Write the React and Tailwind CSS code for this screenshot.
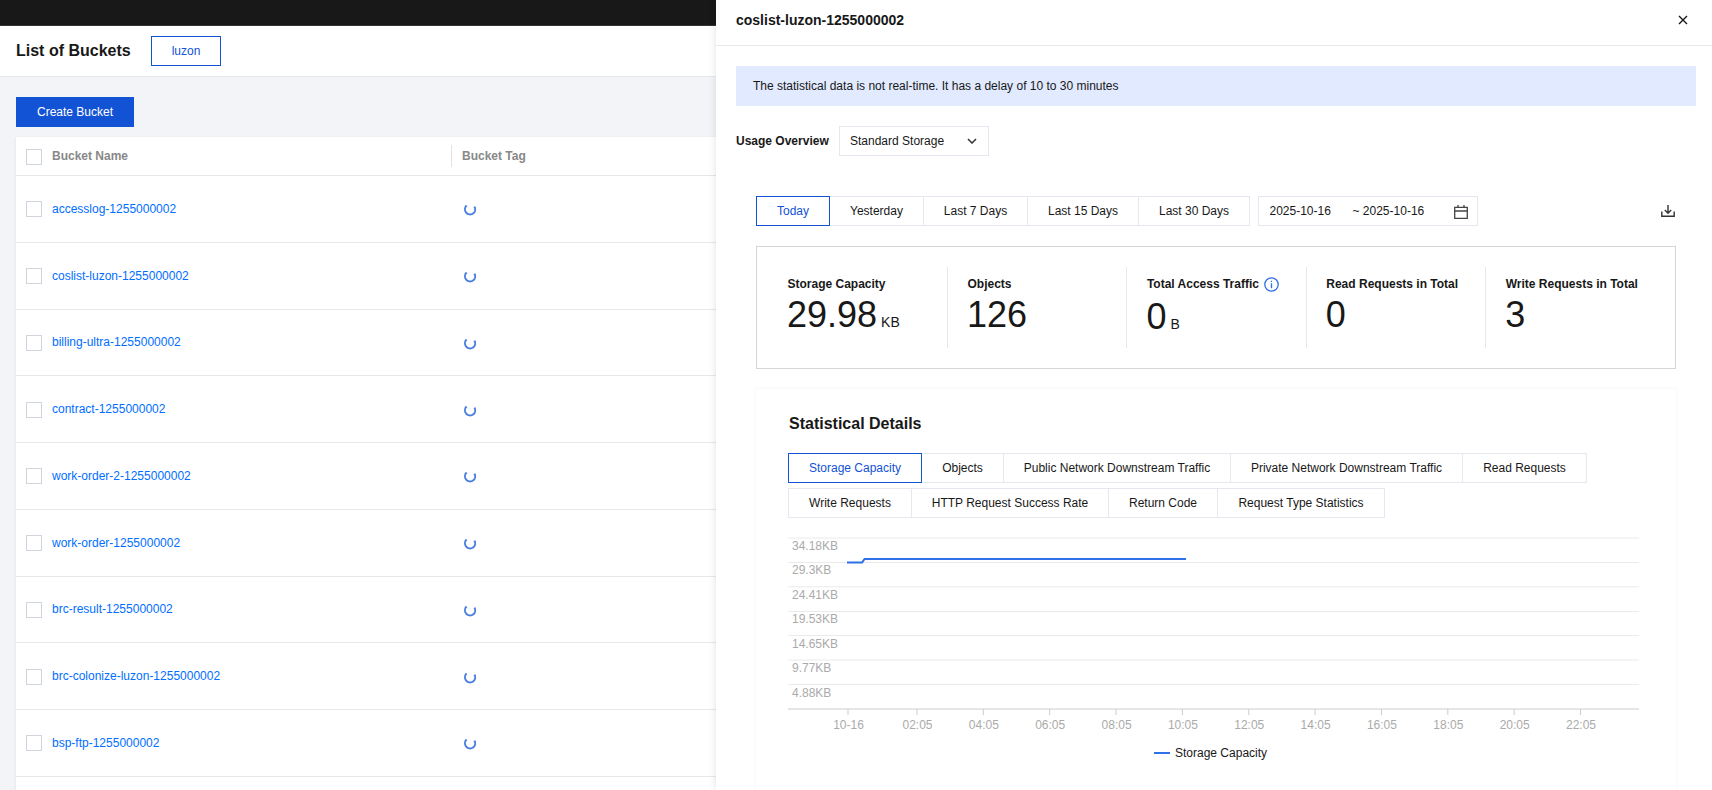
import React from "react";

const buckets = [
  "accesslog-1255000002",
  "coslist-luzon-1255000002",
  "billing-ultra-1255000002",
  "contract-1255000002",
  "work-order-2-1255000002",
  "work-order-1255000002",
  "brc-result-1255000002",
  "brc-colonize-luzon-1255000002",
  "bsp-ftp-1255000002",
  "",
];

const ranges = [
  { label: "Today", w: "w-[74px]" },
  { label: "Yesterday", w: "w-[94px]" },
  { label: "Last 7 Days", w: "w-[104px]" },
  { label: "Last 15 Days", w: "w-[111px]" },
  { label: "Last 30 Days", w: "w-[111px]" },
];

const metricsA = [
  { label: "Storage Capacity", w: "w-[134px]" },
  { label: "Objects", w: "w-[82px]" },
  { label: "Public Network Downstream Traffic", w: "w-[227px]" },
  { label: "Private Network Downstream Traffic", w: "w-[232px]" },
  { label: "Read Requests", w: "w-[124px]" },
];
const metricsB = [
  { label: "Write Requests", w: "w-[124px]" },
  { label: "HTTP Request Success Rate", w: "w-[197px]" },
  { label: "Return Code", w: "w-[109px]" },
  { label: "Request Type Statistics", w: "w-[167px]" },
];

const stats = [
  { label: "Storage Capacity", value: "29.98", unit: "KB" },
  { label: "Objects", value: "126" },
  { label: "Total Access Traffic", value: "0", unit: "B", info: true },
  { label: "Read Requests in Total", value: "0" },
  { label: "Write Requests in Total", value: "3" },
];

const yTicks = [
  { label: "34.18KB", line: 10, text: 22 },
  { label: "29.3KB", line: 34.5, text: 46 },
  { label: "24.41KB", line: 58.8, text: 71 },
  { label: "19.53KB", line: 83.5, text: 95 },
  { label: "14.65KB", line: 107.5, text: 120 },
  { label: "9.77KB", line: 132, text: 144 },
  { label: "4.88KB", line: 156.5, text: 169 },
];

const xTicks = [
  "10-16", "02:05", "04:05", "06:05", "08:05", "10:05",
  "12:05", "14:05", "16:05", "18:05", "20:05", "22:05",
];

function Checkbox() {
  return <span className="mt-px h-4 w-4 shrink-0 border border-[#cfd5de] bg-white" />;
}

function Segments({ items, active }) {
  return (
    <div className="flex">
      {items.map((it, i) => (
        <button
          key={it.label}
          className={
            "h-[30px] whitespace-nowrap border text-center leading-[28px] " +
            it.w +
            (i === active
              ? " border-[#1253d5] text-[#1253d5]"
              : i === 0
                ? " border-[#e5e8ef]"
                : " border-l-0 border-[#e5e8ef]")
          }
        >
          {it.label}
        </button>
      ))}
    </div>
  );
}

function Spinner() {
  return (
    <svg className="mt-[3px]" width="16" height="16" viewBox="0 0 16 16" fill="none">
      <path d="M4.6 3.6A5.1 5.1 0 1 0 12.4 4.6" stroke="#4a7fe0" strokeWidth="2" />
    </svg>
  );
}

function Chart() {
  return (
    <svg width="853" height="240" viewBox="0 0 853 240" className="block font-['Liberation_Sans',Arial,sans-serif] text-xs">
      {yTicks.map((t) => (
        <g key={t.label}>
          <line x1="0" x2="851" y1={t.line} y2={t.line} stroke="#eaeaea" />
          <text x="4" y={t.text} fill="#aaaaaa">{t.label}</text>
        </g>
      ))}
      <line x1="0" x2="851" y1="181" y2="181" stroke="#cccccc" />
      {xTicks.map((t, i) => {
        const x = i === 0 ? 60 : 129 + (i - 1) * 66.35;
        return (
          <g key={t}>
            <line x1={x} x2={x} y1="181" y2="187" stroke="#cccccc" />
            <text x={x + 0.5} y="201" textAnchor="middle" fill="#aaaaaa">{t}</text>
          </g>
        );
      })}
      <path d="M59 34.6H74L76.5 31H398" fill="none" stroke="#2f6fe8" strokeWidth="2" strokeLinejoin="round" />
      <line x1="366" x2="382" y1="225" y2="225" stroke="#2f6fe8" strokeWidth="2" />
      <text x="387" y="229" fill="#181818">Storage Capacity</text>
    </svg>
  );
}

export default function App() {
  return (
    <div className="flex h-[790px] w-[1712px] overflow-hidden bg-[#f2f4f8] font-['Liberation_Sans',Arial,sans-serif] text-xs text-[#181818]">
      <main className="w-[716px] shrink-0 overflow-hidden">
        <div className="h-[26px] border-b border-[#353535] bg-[#181818]" />
        <header className="flex h-[51px] items-center border-b border-[#e5e8ef] bg-white pl-4">
          <h1 className="w-[135px] text-base font-bold">List of Buckets</h1>
          <button className="h-[30px] w-[70px] border border-[#1253d5] leading-[28px] text-[#1253d5]">luzon</button>
        </header>
        <div className="pl-4 pt-5">
          <button className="block h-[30px] w-[118px] bg-[#1253d5] text-white">Create Bucket</button>
          <div className="mt-[10px] bg-white shadow-[0_1px_3px_rgba(54,58,80,0.1)]">
            <div className="flex h-[39px] items-center border-b border-[#e5e5ea] pl-[10px] font-bold text-[#888888]">
              <Checkbox />
              <span className="ml-[10px] w-[399px]">Bucket Name</span>
              <span className="h-[22px] border-l border-[#e2e2e2] pl-[10px] leading-[22px]">Bucket Tag</span>
            </div>
            {buckets.map((b, i) => (
              <div key={i} className="flex h-[66.75px] items-center border-b border-[#e8e8ec] pl-[10px]">
                <Checkbox />
                <a className="ml-[10px] w-[410px] text-[#006eff]">{b}</a>
                <Spinner />
              </div>
            ))}
          </div>
        </div>
      </main>

      <aside className="relative z-10 min-w-0 flex-1 bg-white shadow-[0_0_8px_rgba(0,0,0,0.12)]">
        <div className="flex h-[46px] items-center justify-between border-b border-[#e7e8ec] pb-[6px] pl-5 pr-6">
          <h2 className="text-sm font-bold">coslist-luzon-1255000002</h2>
          <svg width="10" height="10" viewBox="0 0 10 10" stroke="#181818" strokeWidth="1.4">
            <path d="M1 1l8 8M9 1L1 9" />
          </svg>
        </div>
        <div className="pl-5 pt-5">
          <div className="h-10 w-[960px] bg-[#e1eaff] pl-[17px] leading-[40px]">
            The statistical data is not real-time. It has a delay of 10 to 30 minutes
          </div>
          <div className="mt-5 flex items-center">
            <span className="w-[103px] font-bold">Usage Overview</span>
            <div className="flex h-[30px] w-[150px] items-center justify-between border border-[#e5e8ef] pl-[10px] pr-[11px]">
              Standard Storage
              <svg width="10" height="6" viewBox="0 0 10 6" fill="none" stroke="#333" strokeWidth="1.5">
                <path d="M1 1l4 4 4-4" />
              </svg>
            </div>
          </div>
        </div>
        <div className="w-[960px] pl-10 pt-10">
          <div className="flex items-center">
            <Segments items={ranges} active={0} />
            <div className="ml-2 flex h-[30px] w-[220px] items-center border border-[#e5e8ef] pl-[10.5px]">
              <span className="w-[83px]">2025-10-16</span>
              <span className="flex-1">~ 2025-10-16</span>
              <svg className="mr-[9px] mt-[2px]" width="14" height="14" viewBox="0 0 14 14" fill="none" stroke="#444" strokeWidth="1.3">
                <path d="M.7 2.3h12.6v11H.7zM.7 6h12.6M4 0v2.3M10 0v2.3" />
              </svg>
            </div>
            <svg className="ml-auto mr-px" width="14" height="12" viewBox="0 0 14 12" fill="none" stroke="#333" strokeWidth="1.4">
              <path d="M.8 6.5v4.7h12.4V6.5M7 0v8M3.8 5L7 8.2 10.2 5" />
            </svg>
          </div>
          <div className="mt-5 flex h-[123px] border border-[#d6d6d6] py-5">
            {stats.map((s, i) => (
              <div
                key={s.label}
                className={
                  "h-[81px] shrink-0 pt-[7px] " +
                  (i === 0 ? "w-[190px] pl-[30px]" : "w-[179.4px] border-l border-[#e5e8ef] pl-[19px]")
                }
              >
                <div className="flex whitespace-nowrap pl-[0.5px] font-bold leading-[20px]">
                  {s.label}
                  {s.info && (
                    <svg className="ml-[5px] mt-[3px]" width="15" height="15" viewBox="0 0 15 15" fill="none" stroke="#2f6fe8" strokeWidth="1.3">
                      <circle cx="7.5" cy="7.5" r="6.7" />
                      <path d="M7.5 6.3v5M7.5 3.8v1.3" />
                    </svg>
                  )}
                </div>
                <div className={"text-[36px] leading-[42px] " + (s.info ? "mt-[2px]" : "")}>
                  {s.value}
                  {s.unit && <span className="ml-1 text-sm">{s.unit}</span>}
                </div>
              </div>
            ))}
          </div>
          <section className="mt-5 h-[500px] bg-white pl-8 pt-[25px] shadow-[0_0_3px_rgba(0,0,0,0.06)]">
            <h3 className="pl-px text-base font-bold leading-[20px]">Statistical Details</h3>
            <div className="mt-[19px]"><Segments items={metricsA} active={0} /></div>
            <div className="mt-[5px]"><Segments items={metricsB} active={-1} /></div>
            <div className="mt-[10px]"><Chart /></div>
          </section>
        </div>
      </aside>
    </div>
  );
}
